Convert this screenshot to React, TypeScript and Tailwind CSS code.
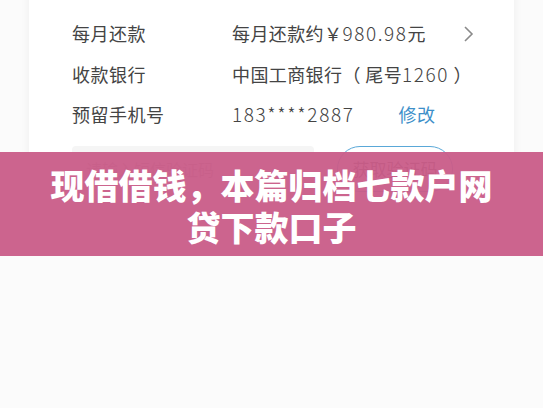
import React from "react";

const Num: React.FC<{ children: React.ReactNode }> = ({ children }) => (
  <span className="text-[19px] tracking-[1.6px] font-light">{children}</span>
);

const App: React.FC = () => {
  return (
    <div
      className="relative w-[543px] h-[408px] overflow-hidden bg-[#fbfbfb]"
      style={{ fontFamily: '"Noto Sans CJK SC", "Noto Sans", sans-serif' }}
    >
      <div className="ml-[29px] w-[485px] -mt-[27px] bg-white rounded-b-lg shadow-[0_2px_10px_rgba(0,0,0,0.06)] pl-[43px] pr-[40px] pb-[28px] text-[#444]">
        <div className="h-[40px] flex items-center pb-[5px]">
          <div className="w-[160px] text-[18px] tracking-[0.5px]">借款期限</div>
          <div className="text-[18px] pl-[8px]"><Num>12</Num>期</div>
        </div>
        <div className="h-[41px] flex items-center">
          <div className="w-[160px] text-[18px] tracking-[0.5px]">每月还款</div>
          <div className="flex-1 flex items-center text-[18px] tracking-[0.4px]">
            <span>每月还款约￥<Num>980.98</Num>元</span>
            <svg className="ml-auto" width="11" height="18" viewBox="0 0 11 18">
              <path d="M2 2 L9 9 L2 16" fill="none" stroke="#8a8a8a" strokeWidth="1.6" />
            </svg>
          </div>
        </div>
        <div className="h-[40px] flex items-center">
          <div className="w-[160px] text-[18px] tracking-[0.5px]">收款银行</div>
          <div className="text-[18px] tracking-[0.4px]">
            中国工商银行（ 尾号<Num>1260</Num> ）
          </div>
        </div>
        <div className="h-[40px] flex items-center">
          <div className="w-[160px] text-[18px] tracking-[0.5px]">预留手机号</div>
          <div className="flex items-center text-[18px]">
            <Num>183****2887</Num>
            <span className="ml-[44px] text-[#3d8fc9] tracking-[0.5px]">修改</span>
          </div>
        </div>
        <div className="mt-[12px] flex items-center gap-[23px]">
          <div className="w-[242px] h-[46px] rounded bg-[#f5f5f5] flex items-center px-[14px] text-[16px] text-[#b5b5b5]">
            请输入短信验证码
          </div>
          <div className="w-[116px] h-[46px] rounded-full border border-[#5aa8d8] flex items-center justify-center text-[17px] text-[#555]">
            获取验证码
          </div>
        </div>
      </div>

      <div className="absolute left-0 right-0 top-[152px] h-[104px] bg-[#c95c88]/95 flex items-center justify-center pt-[4px]">
        <div className="max-w-[452px] text-white text-[34px] leading-[42px] font-black text-center">
          现借借钱，本篇归档七款户网贷下款口子
        </div>
      </div>
    </div>
  );
};

export default App;
